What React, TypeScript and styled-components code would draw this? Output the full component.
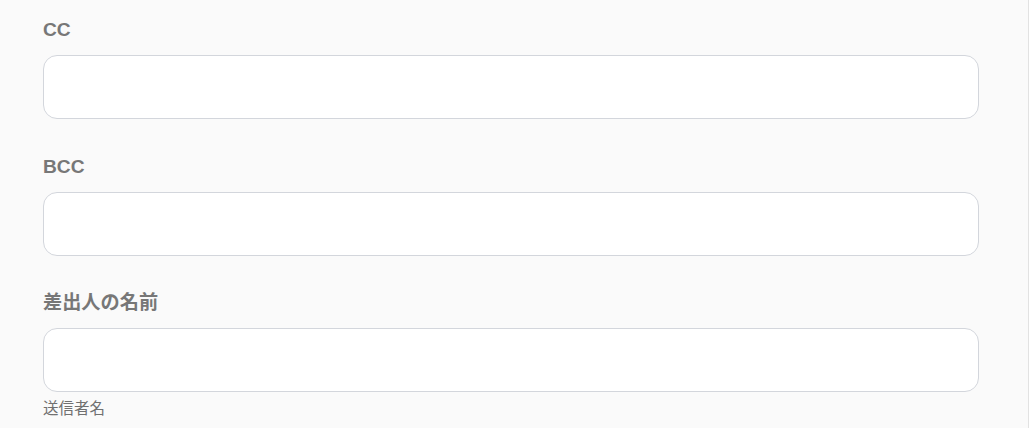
import styled, { createGlobalStyle } from "styled-components";

const GlobalStyle = createGlobalStyle`
  html, body {
    margin: 0;
    padding: 0;
    background: #ffffff;
  }
  body {
    font-family: "Liberation Sans", "Noto Sans CJK JP", Arial, sans-serif;
  }
`;

interface IField {
  label: string;
  hint?: string;
}

const fields: IField[] = [
  { label: "CC" },
  { label: "BCC" },
  { label: "差出人の名前", hint: "送信者名" },
];

export default function App() {
  return (
    <>
      <GlobalStyle />
      <Panel>
        {fields.map(({ label, hint }) => (
          <Field key={label}>
            <Label>{label}</Label>
            <Input type="text" />
            {hint && <Hint>{hint}</Hint>}
          </Field>
        ))}
      </Panel>
    </>
  );
}

const Panel = styled.div`
  box-sizing: border-box;
  width: 1029px;
  height: 428px;
  overflow: hidden;
  background: #fafafa;
  border-right: 1px solid #e2e2e2;
  padding: 17px 50px 0 43px;
  display: flex;
  flex-direction: column;
  gap: 34.5px;
`;

const Field = styled.div`
  display: flex;
  flex-direction: column;
  width: 936px;
`;

const Label = styled.label`
  padding-top: 1px;
  font-size: 19.2px;
  line-height: 24px;
  font-weight: 700;
  color: #777777;
  margin-bottom: 13px;
`;

const Input = styled.input`
  box-sizing: border-box;
  width: 100%;
  height: 64px;
  margin: 0;
  padding: 0 16px;
  background: #ffffff;
  border: 1px solid #d3d6dc;
  border-radius: 14px;
  font-size: 16px;
  font-family: inherit;
  outline: none;
`;

const Hint = styled.div`
  margin-top: 7px;
  font-size: 15.5px;
  line-height: 20px;
  color: #707070;
`;
